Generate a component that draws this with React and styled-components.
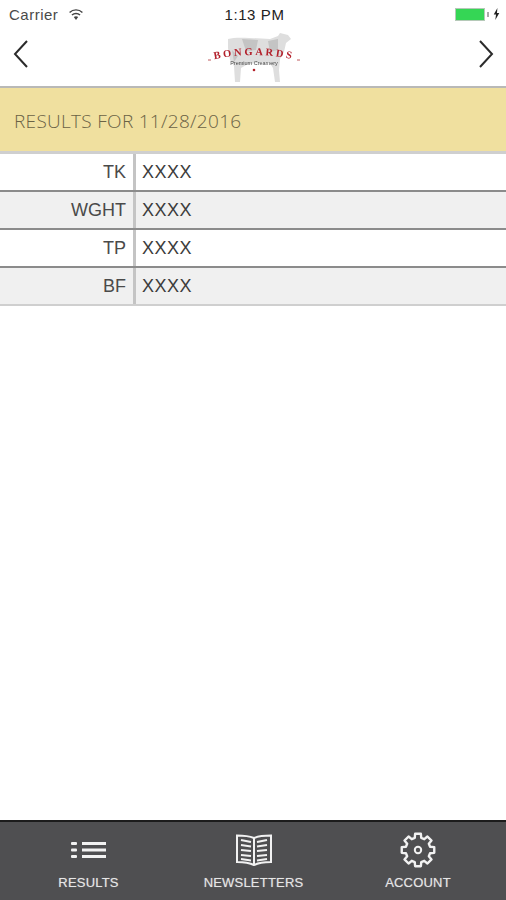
import React from "react";
import styled, { createGlobalStyle } from "styled-components";

const Global = createGlobalStyle`
  html, body { margin: 0; padding: 0; background: #fff; }
  * { box-sizing: border-box; }
`;

const rows = [
  { label: "TK", value: "XXXX" },
  { label: "WGHT", value: "XXXX" },
  { label: "TP", value: "XXXX" },
  { label: "BF", value: "XXXX" },
];

const Page = styled.div`
  width: 506px;
  height: 900px;
  display: flex;
  flex-direction: column;
  background: #fff;
  overflow: hidden;
  font-family: "Liberation Sans", Arial, sans-serif;
`;
const StatusBar = styled.div`
  height: 30px;
  flex: none;
  display: grid;
  grid-template-columns: 1fr auto 1fr;
  align-items: center;
  padding: 0 6px 2px 9px;
  font-size: 15px;
  color: #4a4a4a;
`;
const StatusLeft = styled.div`
  display: flex;
  align-items: center;
  gap: 10px;
  letter-spacing: 0.5px;
`;
const Clock = styled.div`
  color: #222;
  font-size: 15px;
  letter-spacing: 0.6px;
`;
const StatusRight = styled.div`
  display: flex;
  justify-content: flex-end;
  align-items: center;
  gap: 4px;
`;
const Battery = styled.div`
  width: 30px;
  height: 13px;
  background: #35d655;
  border: 1px solid #b5c9b8;
`;
const BatteryCap = styled.div`
  width: 2px;
  height: 5px;
  margin-left: -2px;
  background: #aaa;
`;
const NavBar = styled.div`
  height: 58px;
  flex: none;
  display: flex;
  align-items: center;
  justify-content: space-between;
  padding: 0 11px 8px 12px;
  border-bottom: 2px solid #b9b9b7;
`;
const Banner = styled.div`
  height: 66px;
  flex: none;
  display: flex;
  align-items: center;
  padding: 3px 0 0 14px;
  background: #f0e09f;
  color: #6a6245;
  font-family: "Open Sans", sans-serif;
  font-weight: 300;
  font-size: 19px;
  letter-spacing: 0.3px;
  border-bottom: 3px solid #cfcfcf;
`;
const Row = styled.div`
  height: 38px;
  flex: none;
  display: grid;
  grid-template-columns: 133px 3px 1fr;
  background: ${(p) => (p.$alt ? "#f0f0f0" : "#fff")};
  border-bottom: 2px solid ${(p) => (p.$last ? "#cfcfcf" : "#8b8b8b")};
  color: #3c3c3c;
  font-size: 18px;
`;
const Label = styled.div`
  display: flex;
  align-items: center;
  justify-content: flex-end;
  padding: 1px 7px 0 0;
  color: #4a4a4a;
`;
const Divider = styled.div`
  background: #c4c4c4;
`;
const Value = styled.div`
  display: flex;
  align-items: center;
  padding: 1px 0 0 6px;
  letter-spacing: 0.5px;
`;
const Spacer = styled.div`
  flex: 1;
`;
const TabBar = styled.div`
  height: 80px;
  flex: none;
  display: grid;
  grid-template-columns: 177px 153px 1fr;
  background: #4f4f51;
  border-top: 2px solid #1c1c1c;
`;
const Tab = styled.div`
  display: flex;
  flex-direction: column;
  align-items: center;
  justify-content: flex-start;
  height: 100%;
`;
const TabIcon = styled.div`
  height: 54px;
  display: flex;
  align-items: center;
  justify-content: center;
  padding-top: 2px;
`;
const TabLabel = styled.div`
  margin-top: -1px;
  color: #e6e6e6;
  font-size: 13px;
  letter-spacing: 0.2px;
  text-shadow: 0 0 1px rgba(255, 255, 255, 0.4);
`;

const Chevron = ({ flip }) => (
  <svg width="18" height="30" viewBox="0 0 18 30" fill="none">
    <path
      d={flip ? "M3 2 L15 15 L3 28" : "M15 2 L3 15 L15 28"}
      stroke="#2b2b2b"
      strokeWidth="2"
    />
  </svg>
);

const Wifi = () => (
  <svg width="16" height="11" viewBox="0 0 16 12">
    <path d="M8 12 L5.6 8.8 A4 4 0 0 1 10.4 8.8 Z" fill="#444" />
    <path d="M3.6 6.6 A6.4 6.4 0 0 1 12.4 6.6" stroke="#444" strokeWidth="1.6" fill="none" />
    <path d="M1 3.8 A10 10 0 0 1 15 3.8" stroke="#444" strokeWidth="1.6" fill="none" />
  </svg>
);

const Bolt = () => (
  <svg width="7" height="12" viewBox="0 0 7 13">
    <path d="M4.5 0 L0.5 7 H3 L2.2 13 L6.5 5.5 H4 Z" fill="#222" />
  </svg>
);

const Logo = () => (
  <svg width="92" height="56" viewBox="0 0 92 56">
    <defs>
      <filter id="soft">
        <feGaussianBlur stdDeviation="0.45" />
      </filter>
      <path id="arc" d="M3 34 Q46 24 89 34" />
    </defs>
    <g filter="url(#soft)">
      <path
        d="M20 13 C30 10 50 13 62 13 L70 10 L72 7 L80 9 L83 13 L78 17 L76 26 L72 33 L71 44 L72 56 L67 56 L65 42 L61 36 L40 38 L33 42 L32 56 L27 56 L26 40 L22 34 L20 22 Z"
        fill="#dedede"
      />
      <path d="M34 13 L50 14 L48 24 L38 25 Z M60 15 L70 13 L70 24 L62 26 Z M24 24 L30 30 L26 36 Z" fill="#c4c4c4" />
      <text
        fontFamily="Liberation Serif, serif"
        fontWeight="700"
        fontSize="10.5"
        letterSpacing="2.6"
        fill="#b3202c"
      >
        <textPath href="#arc" startOffset="50%" textAnchor="middle">
          BONGARDS
        </textPath>
      </text>
      <path d="M0 34 H3 M89 34 H92" stroke="#c05a5f" strokeWidth="1" />
      <text x="46" y="39" textAnchor="middle" fontFamily="Liberation Sans, sans-serif" fontSize="5.5" fill="#444">
        Premium Creamery
      </text>
      <circle cx="46" cy="44" r="1.3" fill="#b3202c" />
    </g>
  </svg>
);

const ListIcon = () => (
  <svg width="36" height="16" viewBox="0 0 36 16" fill="#f2f2f2">
    <rect x="0" y="0" width="6" height="3" rx="1" />
    <rect x="0" y="6.5" width="6" height="3" rx="1" />
    <rect x="0" y="13" width="6" height="3" rx="1" />
    <rect x="11" y="0" width="24" height="3" />
    <rect x="11" y="6.5" width="24" height="3" />
    <rect x="11" y="13" width="24" height="3" />
  </svg>
);

const BookIcon = () => (
  <svg width="38" height="32" viewBox="0 0 38 32" fill="none" stroke="#f2f2f2" strokeWidth="2">
    <path d="M19 4 C14 2 7 1.5 2 1.5 V28 C8 28 14 28.5 19 31 C24 28.5 30 28 36 28 V1.5 C31 1.5 24 2 19 4 Z" />
    <path d="M19 4 V31" />
    <path
      d="M6 6 L16 8 M6 11 L16 12.5 M6 16 L16 17 M6 21 L16 22 M6 25 L16 26.5 M32 6 L22 8 M32 11 L22 12.5 M32 16 L22 17 M32 21 L22 22 M32 25 L22 26.5"
      strokeWidth="2"
    />
  </svg>
);

// outline of a cog with 8 teeth, worked out from the angles
const gearPath = () => {
  const pt = (r, deg) => {
    const a = (deg * Math.PI) / 180;
    return `${(r * Math.sin(a)).toFixed(2)} ${(-r * Math.cos(a)).toFixed(2)}`;
  };
  let d = "";
  for (let i = 0; i < 8; i++) {
    const c = i * 45;
    d += `${i === 0 ? "M" : "L"}${pt(12.5, c - 15)} L${pt(16.5, c - 10)} L${pt(16.5, c + 10)} L${pt(12.5, c + 15)} `;
  }
  return d + "Z";
};

const GearIcon = () => (
  <svg width="38" height="38" viewBox="-19 -19 38 38" fill="none" stroke="#f2f2f2" strokeWidth="2.4" strokeLinejoin="round">
    <circle r="3.2" strokeWidth="2" />
    <path d={gearPath()} />
  </svg>
);

export default function App() {
  return (
    <Page>
      <Global />
      <StatusBar>
        <StatusLeft>
          Carrier <Wifi />
        </StatusLeft>
        <Clock>1:13 PM</Clock>
        <StatusRight>
          <Battery />
          <BatteryCap />
          <Bolt />
        </StatusRight>
      </StatusBar>
      <NavBar>
        <Chevron />
        <Logo />
        <Chevron flip />
      </NavBar>
      <Banner>RESULTS FOR 11/28/2016</Banner>
      {rows.map((r, i) => (
        <Row key={r.label} $alt={i % 2 === 1} $last={i === rows.length - 1}>
          <Label>{r.label}</Label>
          <Divider />
          <Value>{r.value}</Value>
        </Row>
      ))}
      <Spacer />
      <TabBar>
        <Tab>
          <TabIcon>
            <ListIcon />
          </TabIcon>
          <TabLabel>RESULTS</TabLabel>
        </Tab>
        <Tab>
          <TabIcon>
            <BookIcon />
          </TabIcon>
          <TabLabel>NEWSLETTERS</TabLabel>
        </Tab>
        <Tab>
          <TabIcon>
            <GearIcon />
          </TabIcon>
          <TabLabel>ACCOUNT</TabLabel>
        </Tab>
      </TabBar>
    </Page>
  );
}
